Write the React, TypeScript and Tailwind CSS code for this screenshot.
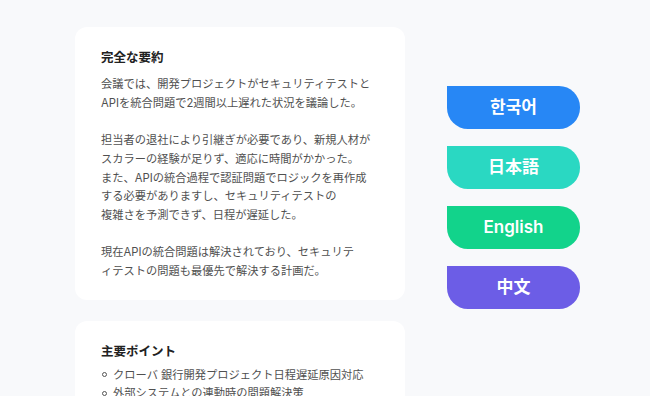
const FONT = { fontFamily: 'Inter, "Noto Sans CJK JP", "Noto Sans", sans-serif' };
const KR = { fontFamily: 'Inter, "Noto Sans CJK KR", "Noto Sans CJK JP", sans-serif' };

const paragraphs = [
  [
    "会議では、開発プロジェクトがセキュリティテストと",
    "APIを統合問題で2週間以上遅れた状況を議論した。",
  ],
  [
    "担当者の退社により引継ぎが必要であり、新規人材が",
    "スカラーの経験が足りず、適応に時間がかかった。",
    "また、APIの統合過程で認証問題でロジックを再作成",
    "する必要がありますし、セキュリティテストの",
    "複雑さを予測できず、日程が遅延した。",
  ],
  [
    "現在APIの統合問題は解決されており、セキュリテ",
    "ィテストの問題も最優先で解決する計画だ。",
  ],
];

const points = [
  "クローバ 銀行開発プロジェクト日程遅延原因対応",
  "外部システムとの連動時の問題解決策",
];

const langs = [
  { label: "한국어", cls: "bg-[#2787F5]" },
  { label: "日本語", cls: "bg-[#2AD8C2]" },
  { label: "English", cls: "bg-[#12D38B]" },
  { label: "中文", cls: "bg-[#6C5DE6]" },
];

function App() {
  return (
    <div
      className="flex h-[396px] w-[650px] overflow-hidden bg-[#F8F9FB]"
      style={FONT}
    >
      {/* Left: summary cards */}
      <div className="ml-[75px] mt-[27px] flex w-[330px] shrink-0 flex-col gap-[21px]">
        <div className="rounded-[12px] bg-white px-[26px] pb-[19px] pt-[22px]">
          <h2 className="text-[12.5px] font-bold leading-[18px] text-[#222]">
            完全な要約
          </h2>
          <div className="mt-[8px] flex flex-col gap-[18.7px] text-[11.25px] leading-[18.7px] text-[#505050]">
            {paragraphs.map((p, i) => (
              <div key={i}>
                {p.map((line) => (
                  <div key={line} className="whitespace-nowrap">
                    {line}
                  </div>
                ))}
              </div>
            ))}
          </div>
        </div>

        <div className="rounded-[12px] bg-white px-[26px] pb-[20px] pt-[22px]">
          <h2 className="text-[12.5px] font-bold leading-[18px] text-[#222]">
            主要ポイント
          </h2>
          <ul className="mt-[5px] text-[11.25px] leading-[18.5px] text-[#505050]">
            {points.map((pt) => (
              <li key={pt} className="flex items-center gap-[6px] whitespace-nowrap">
                <span className="ml-[1px] h-[5px] w-[5px] shrink-0 rounded-full border border-[#555]" />
                {pt}
              </li>
            ))}
          </ul>
        </div>
      </div>

      {/* Right: language buttons */}
      <div className="ml-[42px] mt-[86px] flex flex-col gap-[17px]">
        {langs.map((l) => (
          <button
            key={l.label}
            style={KR}
            className={`flex h-[43px] w-[133px] items-center justify-center rounded-[21px] rounded-tl-none text-[17px] font-semibold text-white ${l.cls}`}
          >
            {l.label}
          </button>
        ))}
      </div>
    </div>
  );
}

export default App;
